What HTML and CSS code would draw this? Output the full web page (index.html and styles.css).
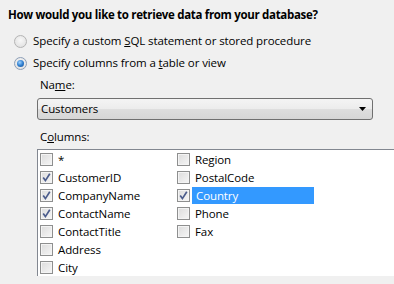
FILE: index.html
```html
<!DOCTYPE html>
<html lang="en">
<head>
    <meta charset="UTF-8">
    <title>Configure the Select Statement</title>
    <link rel="stylesheet" href="styles.css">
</head>
<body>
    <div class="wizard-page">
        <h1 class="question">How would you like to retrieve data from your database?</h1>

        <label class="radio-row">
            <span class="radio"></span>
            <span>Specify a custom <u>S</u>QL statement or stored procedure</span>
        </label>
        <label class="radio-row">
            <span class="radio checked"></span>
            <span>Specify columns from a <u>t</u>able or view</span>
        </label>

        <div class="table-options">
            <div class="field-label">Na<u>m</u>e:</div>
            <div class="combo">
                <span>Customers</span>
                <svg class="combo-arrow" width="7" height="4" viewBox="0 0 7 4"><path d="M0 0h7L3.5 4z" fill="#000"/></svg>
            </div>

            <div class="field-label columns-label">C<u>o</u>lumns:</div>
            <div class="column-list">
                <div class="column-item"><span class="check"></span><span class="name">*</span></div>
                <div class="column-item"><span class="check"><svg viewBox="0 0 11 11"><path d="M2.2 5.6L4.4 8.6L8.8 1.8"/></svg></span><span class="name">CustomerID</span></div>
                <div class="column-item"><span class="check"><svg viewBox="0 0 11 11"><path d="M2.2 5.6L4.4 8.6L8.8 1.8"/></svg></span><span class="name">CompanyName</span></div>
                <div class="column-item"><span class="check"><svg viewBox="0 0 11 11"><path d="M2.2 5.6L4.4 8.6L8.8 1.8"/></svg></span><span class="name">ContactName</span></div>
                <div class="column-item"><span class="check"></span><span class="name">ContactTitle</span></div>
                <div class="column-item"><span class="check"></span><span class="name">Address</span></div>
                <div class="column-item"><span class="check"></span><span class="name">City</span></div>
                <div class="column-item"><span class="check"></span><span class="name">Region</span></div>
                <div class="column-item"><span class="check"></span><span class="name">PostalCode</span></div>
                <div class="column-item"><span class="check"><svg viewBox="0 0 11 11"><path d="M2.2 5.6L4.4 8.6L8.8 1.8"/></svg></span><span class="name selected">Country</span></div>
                <div class="column-item"><span class="check"></span><span class="name">Phone</span></div>
                <div class="column-item"><span class="check"></span><span class="name">Fax</span></div>
            </div>
        </div>
    </div>
</body>
</html>
```

FILE: styles.css
```css
* {
    margin: 0;
    padding: 0;
    box-sizing: border-box;
}

body {
    font-family: "Open Sans", "Noto Sans", sans-serif;
    font-size: 11.5px;
    letter-spacing: -0.1px;
    line-height: 16px;
    color: #000;
    background: #f0f0f0;
    overflow: hidden;
}

.wizard-page {
    padding-top: 7px;
}

.question {
    font-size: 11.5px;
    font-weight: 700;
    letter-spacing: -0.32px;
    padding-left: 8px;
    height: 16px;
    margin-bottom: 10px;
}

.radio-row {
    display: flex;
    align-items: center;
    height: 16px;
    padding-left: 14px;
    margin-bottom: 6px;
}

.radio {
    width: 13px;
    height: 13px;
    border-radius: 50%;
    border: 1px solid #b4b4b4;
    background: radial-gradient(circle at 50% 40%, #f8f8f8 0%, #dcdcdc 100%);
    margin-right: 6px;
    position: relative;
}

.radio.checked {
    border-color: #8d9fb8;
}

.radio.checked::after {
    content: "";
    position: absolute;
    left: 2px;
    top: 2px;
    width: 7px;
    height: 7px;
    border-radius: 50%;
    background: radial-gradient(circle at 40% 35%, #9fd2ff 0%, #2f7fd0 50%, #1a4d8c 100%);
}

.table-options {
    padding-left: 37px;
}

.field-label {
    padding-left: 3px;
    height: 16px;
}

.combo {
    margin-top: 5px;
    width: 336px;
    height: 22px;
    border: 1px solid #707070;
    border-radius: 3px;
    background: linear-gradient(#f4f4f4 0%, #ececec 50%, #dedede 51%, #d6d6d6 100%);
    display: flex;
    align-items: center;
    justify-content: space-between;
    padding: 0 6px 0 3px;
}

.columns-label {
    margin-top: 9px;
}

.column-list {
    margin-top: 4px;
    width: 370px;
    height: 127px;
    background: #fff;
    border: 1px solid #828790;
    border-right: none;
    border-bottom: none;
    padding: 0 0 0 2px;
    display: grid;
    grid-template-columns: 137px 137px;
    grid-template-rows: repeat(7, 18px);
    grid-auto-flow: column;
    align-content: start;
}

.column-item {
    display: flex;
    align-items: center;
}

.check {
    width: 13px;
    height: 13px;
    border: 1px solid #8e8f8f;
    background: linear-gradient(135deg, #dcdcdc 0%, #f6f6f6 100%);
    box-shadow: inset 0 0 0 1px #f4f4f4;
}

.check svg {
    display: block;
    width: 11px;
    height: 11px;
    fill: none;
    stroke: #4b5c8c;
    stroke-width: 1.7;
}

.name {
    margin-left: 2px;
    padding-left: 3px;
    height: 17px;
    line-height: 17px;
}

.name.selected {
    width: 123px;
    padding-left: 4px;
    background: #3399ff;
    color: #fff;
}
```
